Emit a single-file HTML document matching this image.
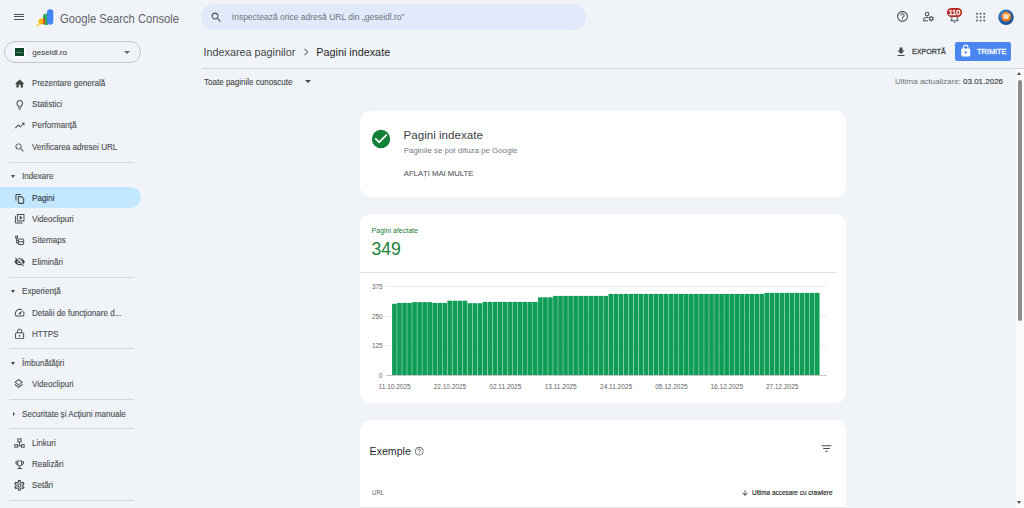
<!DOCTYPE html>
<html><head><meta charset="utf-8">
<style>
*{box-sizing:border-box;margin:0;padding:0}
html,body{width:1024px;height:508px;overflow:hidden;background:#f0f4f9;font-family:"Liberation Sans",sans-serif;color:#1f1f1f;position:relative}
.abs{position:absolute}
.t{position:absolute;white-space:nowrap;line-height:1}
.nv{-webkit-text-stroke:0.12px currentColor;transform:scaleX(0.94);transform-origin:0 0}
.card{position:absolute;left:359.5px;width:486.5px;background:#fff;border-radius:11px}
</style></head>
<body>
<!-- header -->
<div class="abs" style="left:14.2px;top:13.7px;width:9.8px;height:1.1px;background:#4f5254"></div>
<div class="abs" style="left:14.2px;top:16.35px;width:9.8px;height:1.1px;background:#4f5254"></div>
<div class="abs" style="left:14.2px;top:19px;width:9.8px;height:1.1px;background:#4f5254"></div>
<svg class="abs" style="left:0;top:0" width="60" height="30" viewBox="0 0 60 30">
  <path d="M45.6 13.8a2.6 2.6 0 0 0-2.6 2.6V22.3a2.6 2.6 0 0 0 2.6 2.6H48V13.8z" fill="#34a853"/>
  <rect x="47" y="9.3" width="6.3" height="15.4" rx="3.15" fill="#4285f4"/>
  <circle cx="41.4" cy="21.4" r="3" fill="#fbbc04"/>
  <path d="M43 18.9a3 3 0 0 1 0 5" stroke="#ea4335" stroke-width="1.6" fill="none"/>
  <path d="M39.6 23.6L37.3 25.8" stroke="#fbbc04" stroke-width="1.2" stroke-linecap="round"/>
</svg>
<div class="t" style="left:60.2px;top:13.1px;font-size:12.6px;color:#5f6368;transform:scaleX(0.89);transform-origin:0 0">Google Search Console</div>
<div class="abs" style="left:201px;top:4px;width:385px;height:26px;border-radius:13px;background:#e0eafb"></div>
<svg class="abs" style="left:209.9px;top:10.5px" width="12.8" height="12.8" viewBox="0 0 24 24" fill="#505356"><path d="M15.5 14h-.79l-.28-.27C15.41 12.59 16 11.11 16 9.5 16 5.91 13.09 3 9.5 3S3 5.91 3 9.5 5.91 16 9.5 16c1.61 0 3.09-.59 4.23-1.57l.27.28v.79l5 4.99L20.49 19l-4.99-5zm-6 0C7.01 14 5 11.99 5 9.5S7.01 5 9.5 5 14 7.01 14 9.5 11.99 14 9.5 14z"/></svg>
<div class="t" style="left:231.8px;top:12.8px;font-size:8.5px;color:#6f7378">Inspectează orice adresă URL din „geseidl.ro”</div>

<!-- header right icons -->
<svg class="abs" style="left:896.4px;top:10.3px" width="13" height="13" viewBox="0 0 24 24" fill="#505356"><path d="M11 18h2v-2h-2v2zm1-16C6.48 2 2 6.48 2 12s4.48 10 10 10 10-4.48 10-10S17.52 2 12 2zm0 18c-4.41 0-8-3.590-8-8s3.59-8 8-8 8 3.59 8 8-3.59 8-8 8zm0-14c-2.21 0-4 1.79-4 4h2c0-1.1.9-2 2-2s2 .9 2 2c0 2-3 1.75-3 5h2c0-2.25 3-2.5 3-5 0-2.21-1.79-4-4-4z"/></svg>
<svg class="abs" style="left:921.5px;top:10px" width="13" height="13" viewBox="0 0 24 24" fill="none" stroke="#505356">
  <circle cx="9.5" cy="7.5" r="3.3" stroke-width="2"/>
  <path d="M3 20v-1.8c0-2.6 3.3-4.4 6.5-4.4 .8 0 1.5.1 2.2.2" stroke-width="2"/>
  <path d="M2 20h9" stroke-width="2"/>
  <g fill="#444746" stroke="none"><path d="M20.75 16c0-.22-.03-.42-.06-.63l1.14-1.01-1-1.73-1.45.49c-.32-.27-.68-.48-1.08-.63L18 11h-2l-.3 1.49c-.4.15-.76.36-1.08.63l-1.45-.49-1 1.730 1.14 1.01c-.03.21-.06.41-.06.63s.03.42.06.63l-1.14 1.01 1 1.73 1.45-.49c.32.27.68.48 1.08.63L16 21h2l.3-1.49c.4-.15.76-.36 1.08-.63l1.45.49 1-1.73-1.14-1.01c.03-.21.06-.41.06-.63zM17 18c-1.1 0-2-.9-2-2s.9-2 2-2 2 .9 2 2-.9 2-2 2z"/></g>
</svg>
<svg class="abs" style="left:948px;top:10.5px" width="13" height="13" viewBox="0 0 24 24" fill="#5a5e62"><path d="M12 22c1.1 0 2-.9 2-2h-4c0 1.1.89 2 2 2zm6-6v-5c0-3.07-1.64-5.64-4.5-6.32V4c0-.83-.67-1.5-1.5-1.5s-1.5.67-1.5 1.5v.68C7.63 5.36 6 7.92 6 11v5l-2 2v1h16v-1l-2-2zm-2 1H8v-6c0-2.48 1.51-4.5 4-4.5s4 2.02 4 4.5v6z"/></svg>
<div class="abs" style="left:947px;top:7.8px;width:15.2px;height:8.8px;border-radius:4.4px;background:#b3261e"></div>
<div class="t" style="left:947px;width:15.2px;text-align:center;top:8.6px;font-size:7.2px;color:#fff;-webkit-text-stroke:0.35px #fff">110</div>
<svg class="abs" style="left:0;top:0" width="1024" height="30" fill="#505356"><circle cx="977.0" cy="13.7" r="0.95"/><circle cx="977.0" cy="17.1" r="0.95"/><circle cx="977.0" cy="20.5" r="0.95"/><circle cx="980.6" cy="13.7" r="0.95"/><circle cx="980.6" cy="17.1" r="0.95"/><circle cx="980.6" cy="20.5" r="0.95"/><circle cx="984.2" cy="13.7" r="0.95"/><circle cx="984.2" cy="17.1" r="0.95"/><circle cx="984.2" cy="20.5" r="0.95"/></svg>
<svg class="abs" style="left:998px;top:9px" width="16" height="16" viewBox="0 0 16 16">
  <defs><radialGradient id="ag" cx="0.4" cy="0.35" r="0.7"><stop offset="0" stop-color="#3d8fe0"/><stop offset="1" stop-color="#15498c"/></radialGradient>
  <radialGradient id="og" cx="0.45" cy="0.4" r="0.6"><stop offset="0" stop-color="#ffb24a"/><stop offset="1" stop-color="#e8650f"/></radialGradient></defs>
  <circle cx="8" cy="8.2" r="7.7" fill="url(#ag)"/>
  <circle cx="8.2" cy="7.7" r="4.9" fill="url(#og)"/>
  <text x="8.3" y="10.4" text-anchor="middle" font-family="Liberation Sans" font-style="italic" font-weight="bold" font-size="6.6" fill="#fff">W</text>
</svg>

<!-- property selector -->
<div class="abs" style="left:4px;top:41px;width:137px;height:22px;border:1px solid #c4c7c5;border-radius:11px"></div>
<div class="abs" style="left:13.8px;top:46px;width:12px;height:12px;background:#fff;border-radius:2px"></div>
<div class="abs" style="left:15.2px;top:47.8px;width:8.8px;height:8.6px;background:#0d4a2b"></div><div class="abs" style="left:16.4px;top:51.9px;width:6.6px;height:0.9px;background:rgba(255,255,255,0.3)"></div>
<div class="t" style="left:32.3px;top:48.6px;font-size:8px;color:#3a3d40;-webkit-text-stroke:0.06px #3a3d40">geseidl.ro</div>
<div class="abs" style="left:124.2px;top:51.2px;width:0;height:0;border-left:3px solid transparent;border-right:3px solid transparent;border-top:3px solid #5f6368"></div>

<!-- nav -->
<svg class="abs" style="left:13.8px;top:77.6px" width="11.4" height="11.4" viewBox="0 0 24 24" fill="#444746"><path d="M10 20v-6h4v6h5v-8h3L12 3 2 12h3v8z"/></svg>
<div class="t nv" style="left:32px;top:79.00px;font-size:8.6px;color:#4a4d50;font-weight:400">Prezentare generală</div>
<svg class="abs" style="left:13.8px;top:98.7px" width="11.4" height="11.4" viewBox="0 0 24 24" fill="#444746"><path d="M9 21c0 .55.45 1 1 1h4c.55 0 1-.45 1-1v-1H9v1zm3-19C8.14 2 5 5.14 5 9c0 2.38 1.19 4.47 3 5.74V17c0 .55.45 1 1 1h6c.55 0 1-.45 1-1v-2.26c1.81-1.27 3-3.36 3-5.74 0-3.86-3.14-7-7-7zm2.85 11.1l-.85.6V16h-4v-2.3l-.85-.6C7.8 12.16 7 10.63 7 9c0-2.76 2.24-5 5-5s5 2.24 5 5c0 1.630-.8 3.16-2.15 4.1z"/></svg>
<div class="t nv" style="left:32px;top:100.10px;font-size:8.6px;color:#4a4d50;font-weight:400">Statistici</div>
<svg class="abs" style="left:13.8px;top:119.9px" width="11.4" height="11.4" viewBox="0 0 24 24" fill="#444746"><path d="M16 6l2.29 2.29-4.88 4.88-4-4L2 16.59 3.41 18l6-6 4 4 6.3-6.29L22 12V6z"/></svg>
<div class="t nv" style="left:32px;top:121.30px;font-size:8.6px;color:#4a4d50;font-weight:400">Performanță</div>
<svg class="abs" style="left:13.8px;top:141.9px" width="11.4" height="11.4" viewBox="0 0 24 24" fill="#444746"><path d="M15.5 14h-.79l-.28-.27C15.41 12.59 16 11.11 16 9.5 16 5.91 13.09 3 9.5 3S3 5.910 3 9.5 5.91 16 9.5 16c1.61 0 3.09-.59 4.23-1.57l.27.28v.79l5 4.99L20.49 19l-4.99-5zm-6 0C7.01 14 5 11.99 5 9.5S7.01 5 9.5 5 14 7.01 14 9.5 11.99 14 9.5 14z"/></svg>
<div class="t nv" style="left:32px;top:142.80px;font-size:8.6px;color:#4a4d50;font-weight:400">Verificarea adresei URL</div>
<div class="abs" style="left:9px;top:161.8px;width:125px;height:1px;background:#d6d9db"></div>
<div class="abs" style="left:11.4px;top:175.0px;width:0;height:0;border-left:2.4px solid transparent;border-right:2.4px solid transparent;border-top:3.1px solid #444746"></div>
<div class="t nv" style="left:21.5px;top:172.30px;font-size:8.6px;color:#4a4d50;font-weight:400">Indexare</div>
<div class="abs" style="left:0;top:187px;width:141px;height:21px;border-radius:0 10.5px 10.5px 0;background:#c2e7ff"></div>
<svg class="abs" style="left:13.8px;top:192.7px" width="11.4" height="11.4" viewBox="0 0 24 24" fill="#444746"><g fill="none" stroke="#444746" stroke-width="2.2"><path d="M4.1 16V4.6A1.5 1.5 0 0 1 5.6 3.1H15"/><path d="M9.1 9.1A1.5 1.5 0 0 1 10.6 7.6H16l4.4 4.4v8.4a1.5 1.5 0 0 1-1.5 1.5h-8.3a1.5 1.5 0 0 1-1.5-1.5z"/></g></svg>
<div class="t nv" style="left:32px;top:194.10px;font-size:8.6px;color:#2b3540;font-weight:400">Pagini</div>
<svg class="abs" style="left:13.8px;top:213.2px" width="11.4" height="11.4" viewBox="0 0 24 24" fill="#444746"><path d="M4 6H2v14c0 1.1.9 2 2 2h14v-2H4V6zm16-4H8c-1.1 0-2 .9-2 2v12c0 1.1.9 2 2 2h12c1.1 0 2-.9 2-2V4c0-1.1-.9-2-2-2zm0 14H8V4h12v12zM12 5.5v9l6-4.5z"/></svg>
<div class="t nv" style="left:32px;top:214.60px;font-size:8.6px;color:#4a4d50;font-weight:400">Videoclipuri</div>
<svg class="abs" style="left:13.8px;top:234.8px" width="11.4" height="11.4" viewBox="0 0 24 24" fill="#444746"><g fill="none" stroke="#444746" stroke-width="2"><rect x="3.7" y="2.3" width="3.8" height="4.6"/><rect x="9.3" y="8.6" width="11" height="11.4" rx="1"/><path d="M9.3 14.3h11M5.6 6.9v10.2h3.7M5.6 11.3h3.7"/></g></svg>
<div class="t nv" style="left:32px;top:236.20px;font-size:8.6px;color:#4a4d50;font-weight:400">Sitemaps</div>
<svg class="abs" style="left:13.8px;top:256.1px" width="11.4" height="11.4" viewBox="0 0 24 24" fill="#444746"><path d="M12 7c2.76 0 5 2.24 5 5 0 .65-.13 1.26-.36 1.83l2.92 2.92c1.51-1.26 2.7-2.89 3.43-4.75-1.73-4.39-6-7.5-11-7.5-1.4 0-2.74.25-3.98.7l2.16 2.16C10.74 7.13 11.35 7 12 7zM2 4.27l2.28 2.28.46.46C3.08 8.3 1.78 10.02 1 12c1.730 4.39 6 7.5 11 7.5 1.55 0 3.03-.3 4.38-.84l.42.42L19.73 22 21 20.73 3.27 3 2 4.27zM7.53 9.8l1.55 1.55c-.05.21-.08.43-.08.65 0 1.66 1.34 3 3 3 .22 0 .44-.03.65-.08l1.55 1.55c-.67.33-1.41.53-2.2.53-2.76 0-5-2.24-5-5 0-.79.2-1.53.53-2.2zm4.31-.78l3.15 3.15.02-.16c0-1.66-1.34-3-3-3l-.17.01z"/></svg>
<div class="t nv" style="left:32px;top:257.50px;font-size:8.6px;color:#4a4d50;font-weight:400">Eliminări</div>
<div class="abs" style="left:9px;top:276.5px;width:125px;height:1px;background:#d6d9db"></div>
<div class="abs" style="left:11.4px;top:289.7px;width:0;height:0;border-left:2.4px solid transparent;border-right:2.4px solid transparent;border-top:3.1px solid #444746"></div>
<div class="t nv" style="left:21.5px;top:287.00px;font-size:8.6px;color:#4a4d50;font-weight:400">Experiență</div>
<svg class="abs" style="left:13.8px;top:306.6px" width="11.4" height="11.4" viewBox="0 0 24 24" fill="#444746"><path d="M20.38 8.57l-1.23 1.85a8 8 0 0 1-.22 7.58H5.07A8 8 0 0 1 15.58 6.85l1.85-1.23A10 10 0 0 0 3.35 19a2 2 0 0 0 1.72 1h13.85a2 2 0 0 0 1.74-1 10 10 0 0 0-.27-10.44zm-9.79 6.84a2 2 0 0 0 2.830 0l5.66-8.49-8.49 5.66a2 2 0 0 0 0 2.83z"/></svg>
<div class="t nv" style="left:32px;top:308.60px;font-size:8.6px;color:#4a4d50;font-weight:400">Detalii de funcționare d...</div>
<svg class="abs" style="left:13.8px;top:328.1px" width="11.4" height="11.4" viewBox="0 0 24 24" fill="#444746"><g fill="none" stroke="#444746" stroke-width="2.1"><rect x="3.3" y="10.2" width="17" height="12.4" rx="1.2"/><path d="M7.3 10.2V6.8a4.5 4.5 0 0 1 9 0v3.4"/></g><circle cx="11.8" cy="16.4" r="1.8"/></svg>
<div class="t nv" style="left:32px;top:329.50px;font-size:8.6px;color:#4a4d50;font-weight:400">HTTPS</div>
<div class="abs" style="left:9px;top:348.0px;width:125px;height:1px;background:#d6d9db"></div>
<div class="abs" style="left:11.4px;top:361.9px;width:0;height:0;border-left:2.4px solid transparent;border-right:2.4px solid transparent;border-top:3.1px solid #444746"></div>
<div class="t nv" style="left:21.5px;top:359.20px;font-size:8.6px;color:#4a4d50;font-weight:400">Îmbunătățiri</div>
<svg class="abs" style="left:13.3px;top:378.4px" width="11.4" height="11.4" viewBox="0 0 24 24" fill="#444746"><path d="M11.99 18.54l-7.37-5.73L3 14.07l9 7 9-7-1.63-1.27-7.38 5.74zM12 16l7.36-5.73L21 9l-9-7-9 7 1.63 1.27L12 16zm0-11.47L17.74 9 12 13.47 6.26 9 12 4.53z"/></svg>
<div class="t nv" style="left:32px;top:380.20px;font-size:8.6px;color:#4a4d50;font-weight:400">Videoclipuri</div>
<div class="abs" style="left:9px;top:398.9px;width:125px;height:1px;background:#d6d9db"></div>
<div class="abs" style="left:12.8px;top:411.6px;width:0;height:0;border-top:2.2px solid transparent;border-bottom:2.2px solid transparent;border-left:2.6px solid #444746"></div>
<div class="t nv" style="left:21.5px;top:409.50px;font-size:8.6px;color:#4a4d50;font-weight:400">Securitate și Acțiuni manuale</div>
<div class="abs" style="left:9px;top:428.2px;width:125px;height:1px;background:#d6d9db"></div>
<svg class="abs" style="left:13.8px;top:437.7px" width="11.4" height="11.4" viewBox="0 0 24 24" fill="#444746"><g fill="none" stroke="#444746" stroke-width="2"><rect x="8.2" y="1.8" width="6.6" height="6.6"/><rect x="1.6" y="14" width="5.6" height="5.4"/><rect x="15.8" y="14" width="5.6" height="5.4"/><path d="M11.5 8.4v8.3M7.2 16.7h8.6"/></g></svg>
<div class="t nv" style="left:32px;top:439.10px;font-size:8.6px;color:#4a4d50;font-weight:400">Linkuri</div>
<svg class="abs" style="left:13.8px;top:458.5px" width="11.4" height="11.4" viewBox="0 0 24 24" fill="#444746"><path d="M19 5h-2V3H7v2H5c-1.1 0-2 .9-2 2v1c0 2.55 1.92 4.63 4.39 4.94.63 1.5 1.98 2.63 3.61 2.96V19H7v2h10v-2h-4v-3.1c1.63-.33 2.98-1.46 3.61-2.96C19.08 12.63 21 10.55 21 8V7c0-1.1-.9-2-2-2zM5 8V7h2v3.82C5.84 10.4 5 9.3 5 8zm7 6c-1.65 0-3-1.35-3-3V5h6v6c0 1.65-1.35 3-3 3zm7-6c0 1.3-.84 2.4-2 2.82V7h2v1z"/></svg>
<div class="t nv" style="left:32px;top:459.90px;font-size:8.6px;color:#4a4d50;font-weight:400">Realizări</div>
<svg class="abs" style="left:13.1px;top:479.1px" width="12.8" height="12.8" viewBox="0 0 24 24" fill="#444746"><path d="M19.43 12.98c.04-.32.07-.64.07-.98 0-.34-.03-.66-.07-.98l2.11-1.65c.19-.15.24-.42.12-.64l-2-3.46a.5.5 0 0 0-.61-.22l-2.49 1c-.52-.4-1.08-.73-1.69-.98l-.38-2.65A.49.49 0 0 0 14 2h-4c-.25 0-.46.18-.49.42l-.38 2.65c-.61.25-1.17.59-1.69.98l-2.49-1a.57.57 0 0 0-.18-.03c-.17 0-.34.09-.43.25l-2 3.46c-.13.22-.07.49.12.64l2.11 1.65c-.04.32-.07.65-.07.98 0 .33.03.66.07.98l-2.11 1.65c-.19.15-.24.42-.12.64l2 3.46a.5.5 0 0 0 .61.22l2.49-1c.52.4 1.08.73 1.69.98l.38 2.65c.03.24.24.42.49.42h4c.25 0 .46-.18.49-.42l.38-2.65c.61-.25 1.17-.59 1.69-.98l2.49 1c.06.02.12.03.18.03.17 0 .34-.09.43-.25l2-3.46c.12-.22.07-.49-.12-.64l-2.11-1.65zm-1.98-1.71c.04.31.05.52.05.73 0 .21-.02.43-.05.73l-.14 1.13.89.7 1.08.84-.7 1.21-1.27-.51-1.04-.42-.9.68c-.43.32-.84.56-1.25.73l-1.06.43-.16 1.13-.2 1.35h-1.4l-.19-1.35-.16-1.13-1.06-.43c-.43-.18-.83-.41-1.23-.71l-.91-.7-1.06.43-1.27.51-.7-1.21 1.08-.84.89-.7-.14-1.13c-.03-.31-.05-.54-.05-.74s.02-.43.05-.73l.14-1.13-.89-.7-1.08-.84.7-1.21 1.27.51 1.04.42.9-.68c.43-.32.84-.56 1.25-.73l1.06-.43.16-1.13.2-1.35h1.39l.19 1.35.16 1.13 1.06.43c.43.18.83.41 1.230.71l.91.7 1.06-.43 1.27-.51.7 1.21-1.07.85-.89.7.14 1.13zM12 8c-2.21 0-4 1.79-4 4s1.79 4 4 4 4-1.79 4-4-1.79-4-4-4zm0 6c-1.1 0-2-.9-2-2s.9-2 2-2 2 .9 2 2-.9 2-2 2z"/></svg>
<div class="t nv" style="left:32px;top:481.20px;font-size:8.6px;color:#4a4d50;font-weight:400">Setări</div>
<div class="abs" style="left:9px;top:499.5px;width:125px;height:1px;background:#d6d9db"></div>

<!-- main top -->
<div class="t" style="left:203.5px;top:46.6px;font-size:10.8px;color:#444746">Indexarea paginilor</div>
<svg class="abs" style="left:299.6px;top:45.9px" width="12" height="12" viewBox="0 0 24 24" fill="none" stroke="#5f6368" stroke-width="2.1"><path d="M9.2 5.8l6.2 6.2-6.2 6.2"/></svg>
<div class="t" style="left:316.3px;top:46.6px;font-size:10.8px;color:#1f1f1f">Pagini indexate</div>

<svg class="abs" style="left:894.8px;top:45.9px" width="12" height="12" viewBox="0 0 24 24" fill="#444746"><path d="M19 9h-4V3H9v6H5l7 7 7-7zM5 18v2h14v-2H5z"/></svg>
<div class="t" style="left:911.5px;top:48.1px;font-size:7.9px;color:#444746;-webkit-text-stroke:0.3px #444746;transform:scaleX(0.9);transform-origin:0 0">EXPORTĂ</div>
<div class="abs" style="left:954.8px;top:41.7px;width:56.4px;height:19.2px;border-radius:2.2px;background:#4a86f0"></div>
<svg class="abs" style="left:958.5px;top:44.4px" width="13.5" height="13.5" viewBox="0 0 24 24" fill="#fff"><path d="M18 8h-1V6c0-2.76-2.24-5-5-5S7 3.24 7 6v2H6c-1.1 0-2 .9-2 2v10c0 1.1.9 2 2 2h12c1.1 0 2-.9 2-2V10c0-1.1-.9-2-2-2zm-6 9c-1.1 0-2-.9-2-2s.9-2 2-2 2 .9 2 2-.9 2-2 2zm3.1-9H8.9V6c0-1.71 1.39-3.1 3.1-3.1 1.71 0 3.1 1.39 3.1 3.1v2z"/></svg>
<div class="t" style="left:976.8px;top:47.9px;font-size:7.9px;color:#fff;-webkit-text-stroke:0.3px #fff;transform:scaleX(0.935);transform-origin:0 0">TRIMITE</div>

<div class="abs" style="left:201.6px;top:67.6px;width:823px;height:1px;background:#d2d6d9"></div>

<div class="t" style="left:203.8px;top:77.7px;font-size:8.6px;color:#3a3d40;-webkit-text-stroke:0.08px #3a3d40;transform:scaleX(0.935);transform-origin:0 0">Toate paginile cunoscute</div>
<div class="abs" style="left:305.2px;top:80.4px;width:0;height:0;border-left:3.1px solid transparent;border-right:3.1px solid transparent;border-top:3.2px solid #444746"></div>
<div class="t" style="left:895px;top:77.5px;font-size:8px;color:#6d7175">Ultima actualizare: <span style="color:#303134;-webkit-text-stroke:0.1px #303134">03.01.2026</span></div>

<!-- scrollbar -->
<div class="abs" style="left:1016px;top:69px;width:8px;height:439px;background:#fafafa"></div>
<div class="abs" style="left:1017.2px;top:71.7px;width:0;height:0;border-left:2.8px solid transparent;border-right:2.8px solid transparent;border-bottom:3.1px solid #505050"></div>
<div class="abs" style="left:1017.8px;top:80.4px;width:4.4px;height:241px;border-radius:2.2px;background:#8c8c8c"></div>

<div class="abs" style="left:1017.2px;top:501px;width:0;height:0;border-left:2.8px solid transparent;border-right:2.8px solid transparent;border-top:3.1px solid #505050"></div>
<!-- card 1 -->
<div class="card" style="top:111px;height:86px"></div>
<svg class="abs" style="left:369.6px;top:128.1px" width="22" height="22" viewBox="0 0 24 24" fill="#138039"><circle cx="12" cy="12" r="10"/><path d="M10 17l-5-5 1.41-1.41L10 14.17l7.59-7.59L19 8l-9 9z" fill="#fff"/></svg>
<div class="t" style="left:403.6px;top:129.4px;font-size:11.6px;color:#3c4043">Pagini indexate</div>
<div class="t" style="left:403.8px;top:146.6px;font-size:7.9px;color:#757a7f">Paginile se pot difuza pe Google</div>
<div class="t" style="left:403.8px;top:170px;font-size:7.7px;color:#5f6368;-webkit-text-stroke:0.15px #5f6368">AFLAȚI MAI MULTE</div>

<!-- card 2 -->
<div class="card" style="top:213.5px;height:189.5px"></div>
<div class="t" style="left:371.6px;top:226.8px;font-size:7px;color:#188038">Pagini afectate</div>
<div class="t" style="left:371.4px;top:240.6px;font-size:17.6px;color:#188038">349</div>
<div class="abs" style="left:359.5px;top:272px;width:477.7px;height:1px;background:#e3e3e3"></div>
<div class="t" style="left:350px;width:32.6px;text-align:right;top:284.30px;font-size:6.4px;color:#5f6368">375</div>
<div class="abs" style="left:385.8px;top:286.30px;width:441px;height:0.8px;background:#ebebeb"></div>
<div class="t" style="left:350px;width:32.6px;text-align:right;top:313.70px;font-size:6.4px;color:#5f6368">250</div>
<div class="abs" style="left:385.8px;top:315.70px;width:441px;height:0.8px;background:#ebebeb"></div>
<div class="t" style="left:350px;width:32.6px;text-align:right;top:343.30px;font-size:6.4px;color:#5f6368">125</div>
<div class="abs" style="left:385.8px;top:345.30px;width:441px;height:0.8px;background:#ebebeb"></div>
<div class="t" style="left:350px;width:32.6px;text-align:right;top:372.70px;font-size:6.4px;color:#5f6368">0</div>
<div class="abs" style="left:385.5px;top:374.6px;width:441px;height:1px;background:#c6c6c6"></div>
<svg class="abs" style="left:0;top:0" width="1024" height="508" fill="#0f9d58"><rect x="392.10" y="303.80" width="4.65" height="71.20"/><rect x="397.13" y="302.90" width="4.65" height="72.10"/><rect x="402.17" y="302.90" width="4.65" height="72.10"/><rect x="407.20" y="302.90" width="4.65" height="72.10"/><rect x="412.23" y="302.10" width="4.65" height="72.90"/><rect x="417.27" y="302.10" width="4.65" height="72.90"/><rect x="422.30" y="302.10" width="4.65" height="72.90"/><rect x="427.33" y="302.10" width="4.65" height="72.90"/><rect x="432.36" y="302.90" width="4.65" height="72.10"/><rect x="437.40" y="302.90" width="4.65" height="72.10"/><rect x="442.43" y="302.90" width="4.65" height="72.10"/><rect x="447.46" y="300.70" width="4.65" height="74.30"/><rect x="452.50" y="300.70" width="4.65" height="74.30"/><rect x="457.53" y="300.70" width="4.65" height="74.30"/><rect x="462.56" y="300.70" width="4.65" height="74.30"/><rect x="467.60" y="303.20" width="4.65" height="71.80"/><rect x="472.63" y="303.20" width="4.65" height="71.80"/><rect x="477.66" y="303.20" width="4.65" height="71.80"/><rect x="482.69" y="301.90" width="4.65" height="73.10"/><rect x="487.73" y="301.90" width="4.65" height="73.10"/><rect x="492.76" y="301.90" width="4.65" height="73.10"/><rect x="497.79" y="301.90" width="4.65" height="73.10"/><rect x="502.83" y="301.90" width="4.65" height="73.10"/><rect x="507.86" y="301.90" width="4.65" height="73.10"/><rect x="512.89" y="301.90" width="4.65" height="73.10"/><rect x="517.93" y="301.90" width="4.65" height="73.10"/><rect x="522.96" y="301.90" width="4.65" height="73.10"/><rect x="527.99" y="301.90" width="4.65" height="73.10"/><rect x="533.02" y="301.90" width="4.65" height="73.10"/><rect x="538.06" y="297.30" width="4.65" height="77.70"/><rect x="543.09" y="297.30" width="4.65" height="77.70"/><rect x="548.12" y="297.30" width="4.65" height="77.70"/><rect x="553.16" y="295.90" width="4.65" height="79.10"/><rect x="558.19" y="295.90" width="4.65" height="79.10"/><rect x="563.22" y="295.90" width="4.65" height="79.10"/><rect x="568.25" y="295.90" width="4.65" height="79.10"/><rect x="573.29" y="295.90" width="4.65" height="79.10"/><rect x="578.32" y="295.90" width="4.65" height="79.10"/><rect x="583.35" y="295.90" width="4.65" height="79.10"/><rect x="588.39" y="295.90" width="4.65" height="79.10"/><rect x="593.42" y="295.90" width="4.65" height="79.10"/><rect x="598.45" y="295.90" width="4.65" height="79.10"/><rect x="603.49" y="295.90" width="4.65" height="79.10"/><rect x="608.52" y="293.90" width="4.65" height="81.10"/><rect x="613.55" y="293.90" width="4.65" height="81.10"/><rect x="618.59" y="293.90" width="4.65" height="81.10"/><rect x="623.62" y="293.90" width="4.65" height="81.10"/><rect x="628.65" y="293.90" width="4.65" height="81.10"/><rect x="633.68" y="293.90" width="4.65" height="81.10"/><rect x="638.72" y="293.90" width="4.65" height="81.10"/><rect x="643.75" y="293.90" width="4.65" height="81.10"/><rect x="648.78" y="293.90" width="4.65" height="81.10"/><rect x="653.82" y="293.90" width="4.65" height="81.10"/><rect x="658.85" y="293.90" width="4.65" height="81.10"/><rect x="663.88" y="293.90" width="4.65" height="81.10"/><rect x="668.91" y="293.90" width="4.65" height="81.10"/><rect x="673.95" y="293.90" width="4.65" height="81.10"/><rect x="678.98" y="293.90" width="4.65" height="81.10"/><rect x="684.01" y="293.90" width="4.65" height="81.10"/><rect x="689.05" y="293.90" width="4.65" height="81.10"/><rect x="694.08" y="293.90" width="4.65" height="81.10"/><rect x="699.11" y="293.90" width="4.65" height="81.10"/><rect x="704.15" y="293.90" width="4.65" height="81.10"/><rect x="709.18" y="293.90" width="4.65" height="81.10"/><rect x="714.21" y="293.90" width="4.65" height="81.10"/><rect x="719.25" y="293.90" width="4.65" height="81.10"/><rect x="724.28" y="293.90" width="4.65" height="81.10"/><rect x="729.31" y="293.90" width="4.65" height="81.10"/><rect x="734.34" y="293.90" width="4.65" height="81.10"/><rect x="739.38" y="293.90" width="4.65" height="81.10"/><rect x="744.41" y="293.90" width="4.65" height="81.10"/><rect x="749.44" y="293.90" width="4.65" height="81.10"/><rect x="754.48" y="293.90" width="4.65" height="81.10"/><rect x="759.51" y="293.90" width="4.65" height="81.10"/><rect x="764.54" y="292.90" width="4.65" height="82.10"/><rect x="769.58" y="292.90" width="4.65" height="82.10"/><rect x="774.61" y="292.90" width="4.65" height="82.10"/><rect x="779.64" y="292.90" width="4.65" height="82.10"/><rect x="784.67" y="292.90" width="4.65" height="82.10"/><rect x="789.71" y="292.90" width="4.65" height="82.10"/><rect x="794.74" y="292.90" width="4.65" height="82.10"/><rect x="799.77" y="292.90" width="4.65" height="82.10"/><rect x="804.81" y="292.90" width="4.65" height="82.10"/><rect x="809.84" y="292.90" width="4.65" height="82.10"/><rect x="814.87" y="292.90" width="4.65" height="82.10"/></svg>
<div class="t" style="left:364.62px;width:60px;text-align:center;top:383.65px;font-size:6.5px;color:#5f6368">11.10.2025</div>
<div class="t" style="left:419.98px;width:60px;text-align:center;top:383.65px;font-size:6.5px;color:#5f6368">22.10.2025</div>
<div class="t" style="left:475.34px;width:60px;text-align:center;top:383.65px;font-size:6.5px;color:#5f6368">02.11.2025</div>
<div class="t" style="left:530.71px;width:60px;text-align:center;top:383.65px;font-size:6.5px;color:#5f6368">13.11.2025</div>
<div class="t" style="left:586.07px;width:60px;text-align:center;top:383.65px;font-size:6.5px;color:#5f6368">24.11.2025</div>
<div class="t" style="left:641.43px;width:60px;text-align:center;top:383.65px;font-size:6.5px;color:#5f6368">05.12.2025</div>
<div class="t" style="left:696.79px;width:60px;text-align:center;top:383.65px;font-size:6.5px;color:#5f6368">16.12.2025</div>
<div class="t" style="left:752.16px;width:60px;text-align:center;top:383.65px;font-size:6.5px;color:#5f6368">27.12.2025</div>

<!-- card 3 -->
<div class="card" style="top:420px;height:110px"></div>
<div class="t" style="left:369.6px;top:445.5px;font-size:10.6px;color:#1f1f1f">Exemple</div>
<svg class="abs" style="left:414.2px;top:446.4px" width="10.4" height="10.4" viewBox="0 0 24 24" fill="#70757a"><path d="M11 18h2v-2h-2v2zm1-16C6.48 2 2 6.48 2 12s4.48 10 10 10 10-4.48 10-10S17.52 2 12 2zm0 18c-4.41 0-8-3.59-8-8s3.59-8 8-8 8 3.59 8 8-3.59 8-8 8zm0-14c-2.21 0-4 1.79-4 4h2c0-1.1.9-2 2-2s2 .9 2 2c0 2-3 1.75-3 5h2c0-2.25 3-2.5 3-5 0-2.21-1.79-4-4-4z"/></svg>
<svg class="abs" style="left:820px;top:442px" width="13" height="13" viewBox="0 0 24 24" fill="#444746"><path d="M10 18h4v-2h-4v2zM3 6v2h18V6H3zm3 7h12v-2H6v2z"/></svg>
<div class="t" style="left:371.8px;top:488.6px;font-size:7.4px;color:#5f6368;transform:scaleX(0.82);transform-origin:0 0">URL</div>
<svg class="abs" style="left:740.5px;top:488.6px" width="8" height="8" viewBox="0 0 24 24" fill="#1f1f1f"><path d="M20 12l-1.41-1.41L13 16.17V4h-2v12.17l-5.58-5.59L4 12l8 8 8-8z"/></svg>
<div class="t" style="left:752.2px;top:488.7px;font-size:7px;color:#1f1f1f;-webkit-text-stroke:0.15px #1f1f1f;transform:scaleX(0.915);transform-origin:0 0">Ultima accesare cu crawlere</div>
<div class="abs" style="left:359.5px;top:507px;width:486.5px;height:1px;background:#e3e3e3"></div>

</body></html>
